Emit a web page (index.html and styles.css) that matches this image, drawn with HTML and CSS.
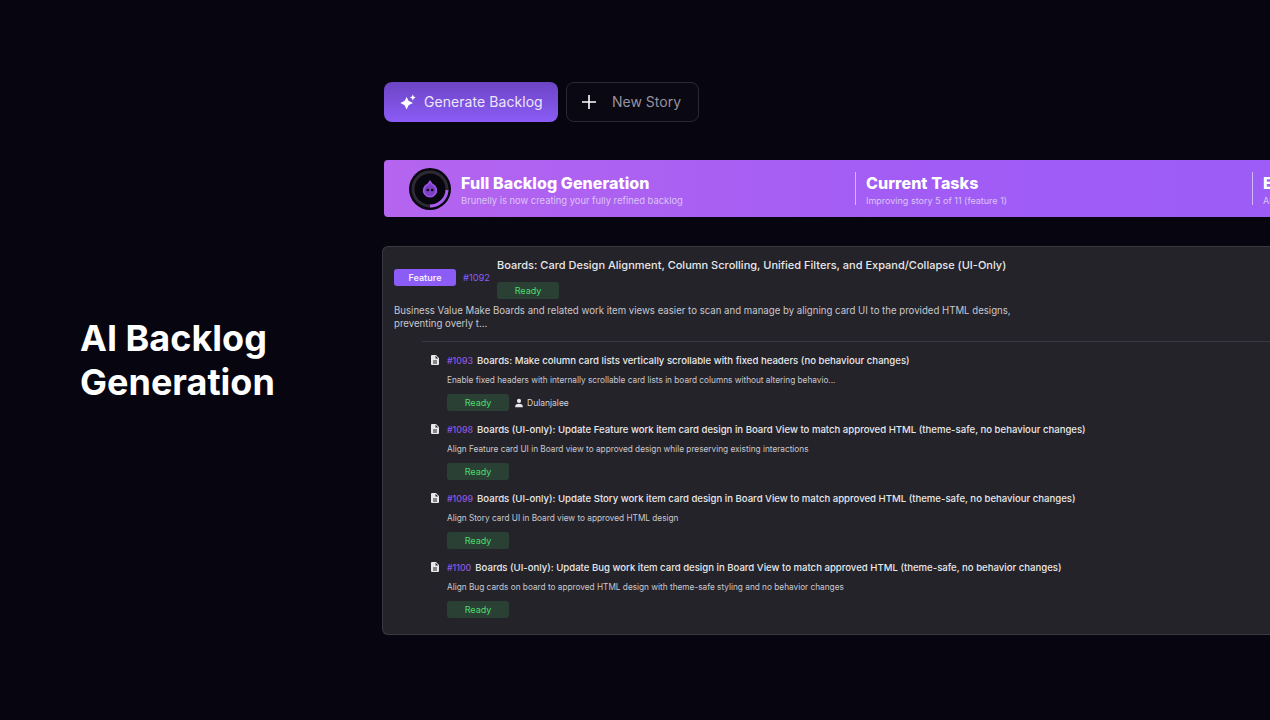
FILE: index.html
```html
<!DOCTYPE html>
<html lang="en">
<head>
    <meta charset="UTF-8">
    <meta name="viewport" content="width=device-width, initial-scale=1.0">
    <title>AI Backlog Generation</title>
    <link rel="stylesheet" href="styles.css">
</head>
<body>
    <div class="slide">
        <h1 class="slide-title">AI Backlog<br>Generation</h1>

        <div class="app">
            <div class="actions">
                <button class="btn btn-primary">
                    <svg class="btn-icon-spark" viewBox="0 0 16 16" width="16" height="16" fill="#fff">
                        <path d="M6.6 3 8.3 6.2a2.6 2.6 0 0 0 1.1 1.1L13 9l-3.6 1.7a2.6 2.6 0 0 0-1.1 1.1L6.6 15.4 4.9 11.8a2.6 2.6 0 0 0-1.1-1.1L.4 9l3.4-1.7a2.6 2.6 0 0 0 1.1-1.1z"/>
                        <path d="M12.8.6l.9 2 2 .9-2 .9-.9 2-.9-2-2-.9 2-.9z"/>
                    </svg>
                    <span class="btn-label">Generate Backlog</span>
                </button>
                <button class="btn btn-ghost">
                    <svg viewBox="0 0 14 14" width="14" height="14" stroke="#fff" stroke-width="1.6" fill="none">
                        <path d="M7 0v14M0 7h14"/>
                    </svg>
                    <span class="btn-label">New Story</span>
                </button>
            </div>

            <div class="banner">
                <div class="banner-lead">
                    <svg class="banner-logo" viewBox="0 0 42 42" width="42" height="42">
                        <circle cx="21" cy="21" r="21" fill="#08060f"/>
                        <circle cx="21" cy="21" r="17" fill="none" stroke="#2e2a34" stroke-width="3"/>
                        <path d="M38 22A17 17 0 0 1 21 38" fill="none" stroke="#a85cf0" stroke-width="3"/>
                        <path d="M21 13.5l2 2.8a6.4 6.4 0 1 1-4 0z" fill="#7c3fc4" stroke="#9d55ea" stroke-width="1.6"/>
                        <circle cx="18.8" cy="22" r="1.3" fill="#08060f"/>
                        <circle cx="23.2" cy="22" r="1.3" fill="#08060f"/>
                    </svg>
                    <div class="banner-text">
                        <div class="banner-title">Full Backlog Generation</div>
                        <div class="banner-sub banner-sub-wide">Brunelly is now creating your fully refined backlog</div>
                    </div>
                </div>
                <div class="banner-section section-tasks">
                    <div class="banner-title">Current Tasks</div>
                    <div class="banner-sub">Improving story 5 of 11 (feature 1)</div>
                </div>
                <div class="banner-section">
                    <div class="banner-title">Estimated Time</div>
                    <div class="banner-sub">About 4 minutes left</div>
                </div>
            </div>

            <div class="feature-card">
                <div class="feature-head">
                    <span class="type-tag">Feature</span>
                    <span class="feature-id">#1092</span>
                    <div class="feature-main">
                        <div class="feature-title">Boards: Card Design Alignment, Column Scrolling, Unified Filters, and Expand/Collapse (UI-Only)</div>
                        <span class="status">Ready</span>
                    </div>
                </div>
                <p class="feature-desc">Business Value Make Boards and related work item views easier to scan and manage by aligning card UI to the provided HTML designs, preventing overly t...</p>

                <div class="story-list">
                    <div class="story">
                        <div class="story-head">
                            <svg class="doc-icon" viewBox="0 0 24 24" width="12" height="12"><path fill="#e8e8ea" d="M14 2H6a2 2 0 0 0-2 2v16a2 2 0 0 0 2 2h12a2 2 0 0 0 2-2V8zm-1 7V3.5L18.5 9zM8 13h8v2H8zm0 4h8v2H8z"/></svg>
                            <span class="story-id">#1093</span>
                            <span class="story-title">Boards: Make column card lists vertically scrollable with fixed headers (no behaviour changes)</span>
                        </div>
                        <div class="story-desc">Enable fixed headers with internally scrollable card lists in board columns without altering behavio...</div>
                        <div class="story-foot">
                            <span class="status">Ready</span>
                            <span class="assignee">
                                <svg viewBox="0 0 24 24" width="10" height="10"><path fill="#e8e8ea" d="M12 12a5 5 0 1 0 0-10 5 5 0 0 0 0 10zm0 2c-4 0-9 2-9 5.5V22h18v-2.5C21 16 16 14 12 14z"/></svg>
                                Dulanjalee
                            </span>
                        </div>
                    </div>
                    <div class="story">
                        <div class="story-head">
                            <svg class="doc-icon" viewBox="0 0 24 24" width="12" height="12"><path fill="#e8e8ea" d="M14 2H6a2 2 0 0 0-2 2v16a2 2 0 0 0 2 2h12a2 2 0 0 0 2-2V8zm-1 7V3.5L18.5 9zM8 13h8v2H8zm0 4h8v2H8z"/></svg>
                            <span class="story-id">#1098</span>
                            <span class="story-title">Boards (UI-only): Update Feature work item card design in Board View to match approved HTML (theme-safe, no behaviour changes)</span>
                        </div>
                        <div class="story-desc">Align Feature card UI in Board view to approved design while preserving existing interactions</div>
                        <div class="story-foot"><span class="status">Ready</span></div>
                    </div>
                    <div class="story">
                        <div class="story-head">
                            <svg class="doc-icon" viewBox="0 0 24 24" width="12" height="12"><path fill="#e8e8ea" d="M14 2H6a2 2 0 0 0-2 2v16a2 2 0 0 0 2 2h12a2 2 0 0 0 2-2V8zm-1 7V3.5L18.5 9zM8 13h8v2H8zm0 4h8v2H8z"/></svg>
                            <span class="story-id">#1099</span>
                            <span class="story-title">Boards (UI-only): Update Story work item card design in Board View to match approved HTML (theme-safe, no behaviour changes)</span>
                        </div>
                        <div class="story-desc">Align Story card UI in Board view to approved HTML design</div>
                        <div class="story-foot"><span class="status">Ready</span></div>
                    </div>
                    <div class="story">
                        <div class="story-head">
                            <svg class="doc-icon" viewBox="0 0 24 24" width="12" height="12"><path fill="#e8e8ea" d="M14 2H6a2 2 0 0 0-2 2v16a2 2 0 0 0 2 2h12a2 2 0 0 0 2-2V8zm-1 7V3.5L18.5 9zM8 13h8v2H8zm0 4h8v2H8z"/></svg>
                            <span class="story-id">#1100</span>
                            <span class="story-title">Boards (UI-only): Update Bug work item card design in Board View to match approved HTML (theme-safe, no behavior changes)</span>
                        </div>
                        <div class="story-desc">Align Bug cards on board to approved HTML design with theme-safe styling and no behavior changes</div>
                        <div class="story-foot"><span class="status">Ready</span></div>
                    </div>
                </div>
            </div>
        </div>
    </div>
</body>
</html>
```

FILE: styles.css
```css
* {
    margin: 0;
    padding: 0;
    box-sizing: border-box;
}

html, body {
    height: 100%;
    overflow: hidden;
}

body {
    font-family: 'Inter', sans-serif;
    background: #07050f;
    color: #fff;
}

.slide {
    display: flex;
    align-items: center;
    height: 720px;
    padding-left: 80px;
}

.slide-title {
    width: 302px;
    flex-shrink: 0;
    font-size: 36px;
    line-height: 44px;
    font-weight: 700;
}

.app {
    flex-shrink: 0;
    width: 1000px;
    padding-left: 2px;
    align-self: flex-start;
    padding-top: 82px;
}

.actions {
    display: flex;
    gap: 8px;
    margin-bottom: 38px;
}

.btn {
    display: flex;
    align-items: center;
    height: 40px;
    border-radius: 8px;
    font-family: 'Inter', sans-serif;
    font-size: 14px;
}

.btn-label {
    margin-top: -2px;
}

.btn-primary {
    width: 174px;
    padding-left: 16px;
    gap: 8px;
    color: #ece6fb;
    border: none;
    letter-spacing: 0.06px;
    background: linear-gradient(180deg, #6c45c4, #8b5cf6);
}

.btn-ghost {
    width: 133px;
    padding-left: 15px;
    gap: 16px;
    color: #96939f;
    background: #0a0812;
    border: 1px solid #2a2832;
}

.banner {
    display: flex;
    align-items: center;
    height: 57px;
    border-radius: 4px 0 0 4px;
    margin-bottom: 29px;
    background: linear-gradient(90deg, #b565ef, #a15cf5 55%, #9c5cf7);
}

.banner-lead {
    display: flex;
    align-items: center;
    gap: 10px;
    width: 471px;
    padding-left: 25px;
    flex-shrink: 0;
}

.banner-logo {
    flex-shrink: 0;
}

.banner-text {
    margin-top: 2px;
}

.banner-section {
    height: 33px;
    padding-left: 10px;
    border-left: 1px solid rgba(255, 255, 255, 0.55);
    white-space: nowrap;
}

.section-tasks {
    width: 397px;
    flex-shrink: 0;
}

.banner-title {
    font-size: 16px;
    line-height: 22px;
    font-weight: 800;
    letter-spacing: 0.08px;
    color: #fff;
    white-space: nowrap;
}

.banner-sub {
    font-size: 9px;
    line-height: 13px;
    color: #dcc4f8;
    white-space: nowrap;
}

.banner-sub-wide {
    font-size: 9.4px;
}

.feature-card {
    width: 1000px;
    height: 389px;
    margin-left: -2px;
    padding: 10px 11px;
    background: #242329;
    border: 1px solid #3a3942;
    border-radius: 6px 0 0 6px;
    border-right: none;
}

.feature-head {
    display: flex;
    align-items: flex-start;
}

.type-tag {
    width: 62px;
    height: 17px;
    margin-top: 12px;
    border-radius: 3px;
    background: #8b5cf6;
    font-size: 9px;
    line-height: 17px;
    font-weight: 600;
    text-align: center;
    color: #f2ecff;
}

.feature-id {
    margin: 12px 7px 0;
    font-size: 9.3px;
    line-height: 17px;
    color: #8b5cf6;
}

.feature-title {
    font-size: 11px;
    line-height: 16px;
    font-weight: 500;
    letter-spacing: 0.01px;
    color: #e8e8ea;
    margin-bottom: 9px;
}

.status {
    display: block;
    width: 62px;
    height: 17px;
    border-radius: 3px;
    background: #2a4035;
    font-size: 9px;
    line-height: 17px;
    text-align: center;
    color: #4ade6a;
}

.feature-desc {
    width: 640px;
    margin-top: 5px;
    font-size: 9.64px;
    line-height: 13px;
    color: #c9c8cf;
}

.story-list {
    margin: 11px 0 0 28px;
    padding-top: 11px;
    border-top: 1px solid #3a3942;
    display: flex;
    flex-direction: column;
    gap: 11px;
}

.story-head {
    display: flex;
    align-items: center;
    gap: 4px;
    height: 14px;
    margin-left: 7px;
}

.doc-icon {
    margin-right: 2px;
}

.story-id {
    font-size: 8.8px;
    font-weight: 500;
    color: #8f58e0;
}

.story-title {
    font-size: 9.58px;
    font-weight: 450;
    color: #e8e8ea;
    white-space: nowrap;
}

.story-desc {
    margin: 7px 0 0 25px;
    font-size: 8.25px;
    line-height: 12px;
    color: #c9c8cf;
    white-space: nowrap;
}

.story-foot {
    display: flex;
    align-items: center;
    gap: 5px;
    margin: 8px 0 0 25px;
}

.assignee {
    display: flex;
    align-items: center;
    gap: 3px;
    font-size: 8.5px;
    color: #d4d4d8;
}
```
